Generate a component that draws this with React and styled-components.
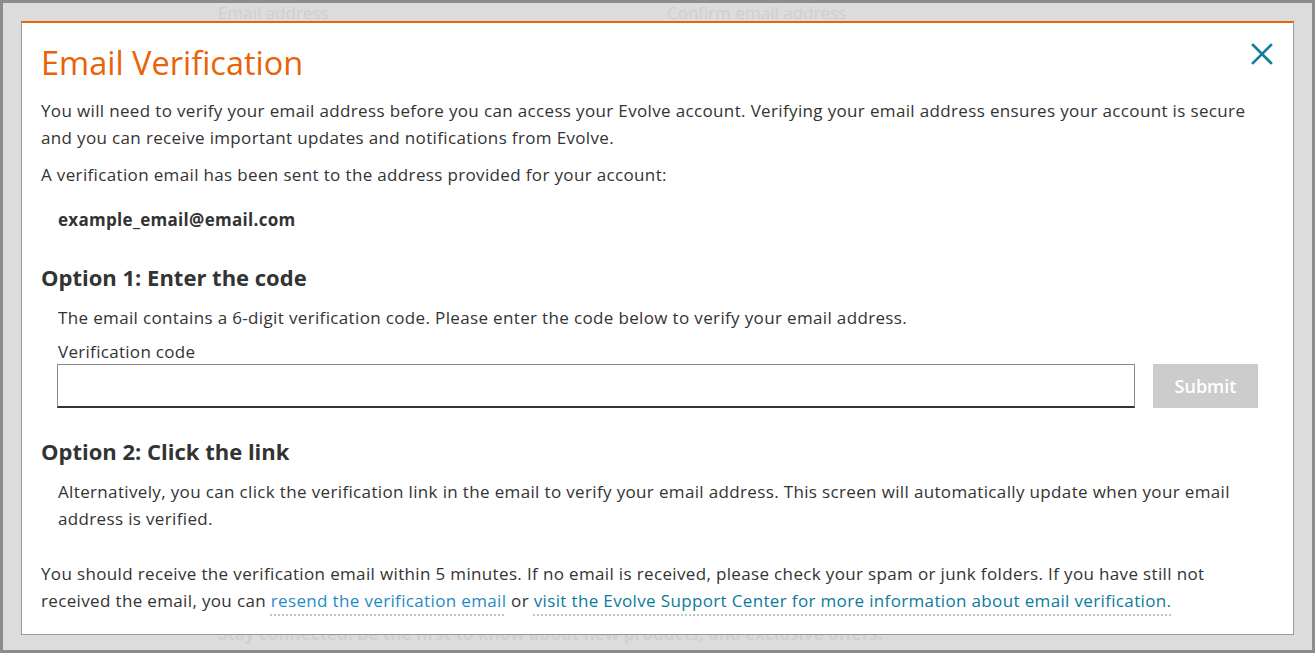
import React, { useState } from 'react';
import styled, { createGlobalStyle } from 'styled-components';

const GlobalStyle = createGlobalStyle`
  html, body {
    margin: 0;
    padding: 0;
    height: 100%;
  }
  body {
    font-family: 'Open Sans', 'Liberation Sans', sans-serif;
    color: #333;
  }
`;

const Page = styled.div`
  position: relative;
  box-sizing: border-box;
  width: 100vw;
  height: 100vh;
  overflow: hidden;
  background: #dcdcdc;
  border: 3px solid #8c8c8c;
`;

/* faint page content behind the overlay */
const BehindRow = styled.div`
  display: flex;
  padding: 0 0 0 215px;
  font-size: 17px;
  line-height: 20px;
  color: #cfcfcf;
`;

const BehindLabel = styled.span`
  width: 449px;
`;

const BehindFooter = styled.div`
  position: absolute;
  left: 215px;
  bottom: 6px;
  font-size: 17px;
  line-height: 20px;
  font-weight: 700;
  color: #d0d0d0;
  white-space: nowrap;
`;

const Modal = styled.div`
  position: absolute;
  top: 18px;
  left: 18px;
  right: 18px;
  box-sizing: border-box;
  background: #fff;
  border: 1px solid #9a9a9a;
  border-top: 2px solid #e8630a;
  padding: 20px 32px 20px 19px;
`;

const CloseButton = styled.button`
  position: absolute;
  top: 18px;
  right: 18px;
  width: 26px;
  height: 26px;
  padding: 0;
  border: none;
  background: transparent;
  cursor: pointer;
  display: flex;
  align-items: center;
  justify-content: center;
`;

const Title = styled.h1`
  margin: 0 0 14px 0;
  font-size: 32.5px;
  line-height: 40px;
  font-weight: 400;
  color: #e8630a;
`;

const Text = styled.p`
  margin: 0 0 ${(p) => p.$gap ?? 10}px ${(p) => (p.$indent ? 17 : 0)}px;
  font-size: 17px;
  letter-spacing: 0.35px;
  line-height: 27px;
`;

const Email = styled.p`
  margin: 18px 0 30px 17px;
  font-size: 17px;
  letter-spacing: 0.3px;
  line-height: 27px;
  font-weight: 700;
`;

const Heading = styled.h2`
  margin: 0 0 12px 0;
  font-size: 22px;
  line-height: 29px;
  font-weight: 700;
  color: #333;
`;

const Label = styled.label`
  display: block;
  margin-left: 17px;
  font-size: 17px;
  letter-spacing: 0.3px;
  line-height: 24px;
`;

const CodeRow = styled.div`
  display: flex;
  align-items: stretch;
  gap: 18px;
  margin: 0 3px 29px 16px;
`;

const CodeInput = styled.input`
  flex: 1;
  height: 44px;
  box-sizing: border-box;
  border: 1px solid #8a8a8a;
  border-bottom: 2px solid #333;
  border-radius: 0;
  padding: 0 10px;
  font-family: inherit;
  font-size: 17px;
  outline: none;
`;

const SubmitButton = styled.button`
  width: 105px;
  height: 44px;
  border: none;
  background: #cccccc;
  color: #fff;
  font-family: inherit;
  font-size: 18px;
  font-weight: 600;
  cursor: default;
`;

const Link = styled.a`
  color: ${(p) => (p.$dark ? '#0c7a9c' : '#1f8bc6')};
  text-decoration: underline dotted #c4c4c4;
  text-decoration-thickness: 2px;
  text-underline-offset: 7px;
  cursor: pointer;
`;

const CloseIcon = () => (
  <svg width="22" height="22" viewBox="0 0 22 22" fill="none">
    <path d="M2 2 L20 20 M20 2 L2 20" stroke="#127c9b" strokeWidth="2.6" strokeLinecap="square" />
  </svg>
);

const App = () => {
  const [code, setCode] = useState('');

  return (
    <>
      <GlobalStyle />
      <Page>
        <BehindRow>
          <BehindLabel>Email address</BehindLabel>
          <BehindLabel>Confirm email address</BehindLabel>
        </BehindRow>
        <BehindFooter>Stay connected! Be the first to know about new products, and exclusive offers.</BehindFooter>

        <Modal>
          <CloseButton aria-label="Close">
            <CloseIcon />
          </CloseButton>
          <Title>Email Verification</Title>
          <Text>
            You will need to verify your email address before you can access your Evolve account. Verifying your email
            address ensures your account is secure and you can receive important updates and notifications from Evolve.
          </Text>
          <Text $gap={0}>A verification email has been sent to the address provided for your account:</Text>
          <Email>example_email@email.com</Email>

          <Heading>Option 1: Enter the code</Heading>
          <Text $indent $gap={9}>
            The email contains a 6-digit verification code. Please enter the code below to verify your email address.
          </Text>
          <Label htmlFor="code">Verification code</Label>
          <CodeRow>
            <CodeInput id="code" value={code} onChange={(e) => setCode(e.target.value)} />
            <SubmitButton disabled={!code}>Submit</SubmitButton>
          </CodeRow>

          <Heading>Option 2: Click the link</Heading>
          <Text $indent $gap={28}>
            Alternatively, you can click the verification link in the email to verify your email address. This screen
            will automatically update when your email address is verified.
          </Text>

          <Text $gap={0}>
            You should receive the verification email within 5 minutes. If no email is received, please check your spam
            or junk folders. If you have still not received the email, you can{' '}
            <Link>resend the verification email</Link> or{' '}
            <Link $dark>visit the Evolve Support Center for more information about email verification.</Link>
          </Text>
        </Modal>
      </Page>
    </>
  );
};

export default App;
